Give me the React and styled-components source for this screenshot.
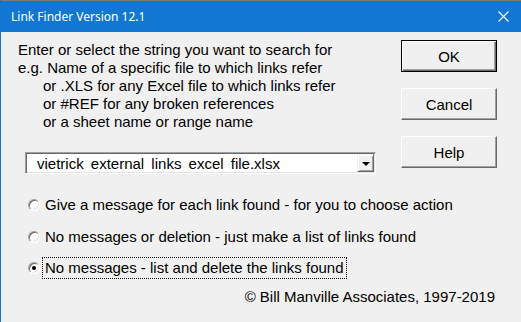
import React from 'react';
import styled, { createGlobalStyle } from 'styled-components';

const GlobalStyle = createGlobalStyle`
  html, body {
    margin: 0;
    padding: 0;
    background: #f0f0f0;
  }
`;

const Window = styled.div`
  width: 521px;
  height: 322px;
  box-sizing: border-box;
  border-left: 1px solid #1277d2;
  background: #f0f0f0;
  font-family: "Liberation Sans", Arial, sans-serif;
  font-size: 15px;
  color: #000;
  overflow: hidden;
`;

const TitleBar = styled.div`
  height: 31px;
  margin-left: -1px;
  border-top: 1px solid #7a7a7a;
  background: #1277d2;
  color: #fff;
  display: flex;
  align-items: center;
  justify-content: space-between;
  padding: 0 12px 0 11px;
  font-family: "Noto Sans", "Open Sans", sans-serif;
  font-size: 12px;
`;

const Close = styled.svg`
  width: 11px;
  height: 11px;
`;

const Body = styled.div`
  display: flex;
  flex-direction: column;
  padding: 0 24px 0 17px;
`;

const Top = styled.div`
  display: flex;
  justify-content: space-between;
`;

const Left = styled.div`
  padding-top: 9px;
  display: flex;
  flex-direction: column;
`;

const Prompt = styled.div`
  line-height: 18px;
`;

const Line = styled.div`
  padding-left: ${p => (p.$indent ? 25 : 0)}px;
  white-space: nowrap;
`;

const Combo = styled.div`
  margin: 21px 0 0 7px;
  height: 22px;
  width: 351px;
  box-sizing: border-box;
  border: 1px solid;
  border-color: #a0a0a0 #fff #fff #a0a0a0;
  box-shadow: inset 1px 1px 0 #696969, inset -1px -1px 0 #e3e3e3;
  background: #fff;
  display: flex;
  align-items: stretch;
  padding: 1px 1px 1px 2px;
`;

const ComboText = styled.div`
  flex: 1;
  padding-left: 9px;
  line-height: 19px;
  word-spacing: 3px;
  white-space: nowrap;
`;

const ComboButton = styled.div`
  width: 17px;
  box-sizing: border-box;
  background: #f0f0f0;
  border: 1px solid;
  border-color: #f0f0f0 #696969 #696969 #f0f0f0;
  box-shadow: inset 1px 1px 0 #fff, inset -1px -1px 0 #a0a0a0;
  display: flex;
  align-items: center;
  justify-content: center;
`;

const Arrow = styled.span`
  width: 0;
  height: 0;
  border-left: 4px solid transparent;
  border-right: 4px solid transparent;
  border-top: 4px solid #000;
  margin-top: 1px;
`;

const Options = styled.div`
  margin: 20px 0 0 10px;
  display: flex;
  flex-direction: column;
  gap: 9.5px;
`;

const Option = styled.label`
  display: flex;
  align-items: center;
  height: 22px;
  gap: 2px;
`;

const Radio = styled.span`
  position: relative;
  width: 12px;
  height: 12px;
  box-sizing: border-box;
  border-radius: 50%;
  border: 1px solid;
  border-color: #a0a0a0 #fff #fff #a0a0a0;
  box-shadow: inset 1px 1px 0 #696969, inset -1px -1px 0 #e3e3e3;
  background: #fff;

  &::after {
    content: '';
    display: ${p => (p.$checked ? 'block' : 'none')};
    position: absolute;
    left: 3px;
    top: 3px;
    width: 4px;
    height: 4px;
    border-radius: 50%;
    background: #000;
  }
`;

const OptionText = styled.span`
  line-height: 20px;
  padding: 0 2px;
  border: 1px dotted ${p => (p.$focus ? '#000' : 'transparent')};
  white-space: nowrap;
`;

const Copyright = styled.div`
  align-self: flex-end;
  margin: 9px 2px 0 0;
  line-height: 18px;
  white-space: nowrap;
`;

const Buttons = styled.div`
  padding-top: 8px;
  display: flex;
  flex-direction: column;
  gap: 16px;
`;

const Button = styled.button`
  width: 96px;
  height: 32px;
  box-sizing: border-box;
  font: inherit;
  color: #000;
  background: #f0f0f0;
  border: 1px solid;
  border-color: ${p => (p.$default ? '#000' : '#fff #696969 #696969 #fff')};
  box-shadow: ${p =>
    p.$default
      ? 'inset 1px 1px 0 #fff, inset -1px -1px 0 #696969, inset -2px -2px 0 #a0a0a0'
      : 'inset -1px -1px 0 #a0a0a0'};
  padding: 0;
`;

const options = [
  'Give a message for each link found - for you to choose action',
  'No messages or deletion - just make a list of links found',
  'No messages - list and delete the links found',
];

export default function App() {
  return (
    <Window>
      <GlobalStyle />
      <TitleBar>
        <span>Link Finder Version 12.1</span>
        <Close viewBox="0 0 11 11">
          <path d="M0.5 0.5 L10.5 10.5 M10.5 0.5 L0.5 10.5" stroke="#fff" strokeWidth="1.1" />
        </Close>
      </TitleBar>
      <Body>
        <Top>
          <Left>
            <Prompt>
              <Line>Enter or select the string you want to search for</Line>
              <Line>e.g. Name of a specific file to which links refer</Line>
              <Line $indent>or .XLS for any Excel file to which links refer</Line>
              <Line $indent>or #REF for any broken references</Line>
              <Line $indent>or a sheet name or range name</Line>
            </Prompt>
            <Combo>
              <ComboText>vietrick external links excel file.xlsx</ComboText>
              <ComboButton>
                <Arrow />
              </ComboButton>
            </Combo>
          </Left>
          <Buttons>
            <Button $default>OK</Button>
            <Button>Cancel</Button>
            <Button>Help</Button>
          </Buttons>
        </Top>
        <Options>
          {options.map((text, i) => (
            <Option key={text}>
              <Radio $checked={i === 2} />
              <OptionText $focus={i === 2}>{text}</OptionText>
            </Option>
          ))}
        </Options>
        <Copyright>© Bill Manville Associates, 1997-2019</Copyright>
      </Body>
    </Window>
  );
}
